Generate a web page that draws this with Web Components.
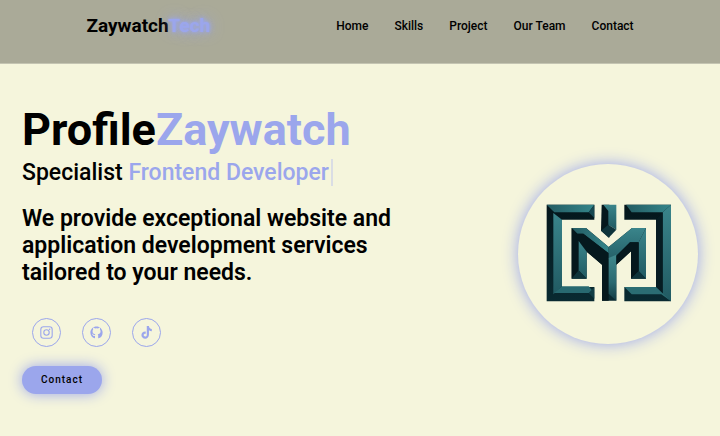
<!DOCTYPE html>
<html lang="en">
<head>
<meta charset="utf-8">
<meta name="viewport" content="width=device-width, initial-scale=1">
<title>ZaywatchTech</title>
<style>
  :root { --accent: #9ba6ec; --paper: #f5f5dc; --ink: #000; }
  body { margin: 0; background: var(--paper); color: var(--ink); font-family: Roboto, "Liberation Sans", sans-serif; }
</style>
</head>
<body>
<site-header>
  <nav-link href="#home">Home</nav-link>
  <nav-link href="#skills">Skills</nav-link>
  <nav-link href="#project">Project</nav-link>
  <nav-link href="#team">Our Team</nav-link>
  <nav-link href="#contact">Contact</nav-link>
</site-header>
<profile-hero>
  <social-link name="instagram"></social-link>
  <social-link name="github"></social-link>
  <social-link name="tiktok"></social-link>
  <brand-emblem slot="picture"></brand-emblem>
</profile-hero>

<template id="header-template">
  <style>
    :host { display: block; background: #aaaa98; border-bottom: 1px solid #c4c4b2; }
    header { display: flex; justify-content: space-between; align-items: center; padding: 14px 12% 25px; }
    .logo { font-size: 19px; line-height: 24px; font-weight: 700; color: inherit; text-decoration: none; }
    .logo span { color: var(--accent); text-shadow: 0 0 3px var(--accent), 0 0 6px var(--accent), 0 0 16px var(--accent); }
    nav { display: flex; gap: 26px; }
  </style>
  <header>
    <a class="logo" href="#home">Zaywatch<span>Tech</span></a>
    <nav aria-label="Main"><slot></slot></nav>
  </header>
</template>

<template id="nav-template">
  <style>
    :host { display: block; font-size: 12px; line-height: 24px; }
    a { color: inherit; text-decoration: none; font-weight: 500; white-space: nowrap; }
  </style>
  <a><slot></slot></a>
</template>

<template id="hero-template">
  <style>
    :host { display: block; }
    main { display: flex; justify-content: space-between; align-items: center; padding: 40px 22px; }
    .copy { flex: 0 1 380px; }
    h1 { margin: 0; font-size: 45px; line-height: 52px; font-weight: 700; white-space: nowrap; }
    h1 span, h2 span { color: var(--accent); }
    h2 { margin: 4px 0 0; font-size: 23px; line-height: 26px; font-weight: 500; white-space: nowrap; }
    h2 span { padding-right: 2px; border-right: 2px solid #dadde4; }
    p { margin: 19px 0 0; font-size: 23px; line-height: 27px; font-weight: 600; }
    .social { display: flex; gap: 21px; margin: 32px 0 0 10px; }
    button { margin-top: 19px; padding: 0 19px; border: 0; border-radius: 14px; background: var(--accent); color: inherit;
      box-shadow: 0 0 14px var(--accent); font: 500 10px/28px Roboto, "Liberation Sans", sans-serif; letter-spacing: 1px; }
    ::slotted([slot="picture"]) { margin-top: 10px; }
  </style>
  <main>
    <div class="copy">
      <h1>Profile<span>Zaywatch</span></h1>
      <h2>Specialist <span>Frontend Developer</span></h2>
      <p>We provide exceptional website and application development services tailored to your needs.</p>
      <div class="social"><slot></slot></div>
      <button type="button">Contact</button>
    </div>
    <slot name="picture"></slot>
  </main>
</template>

<template id="social-template">
  <style>
    :host { display: block; }
    a { display: grid; place-items: center; width: 27px; height: 27px; border: 1px solid var(--accent); border-radius: 50%; color: var(--accent); }
    svg { display: block; width: 13px; height: 13px; }
  </style>
  <a><svg viewBox="0 0 24 24" fill="currentColor" aria-hidden="true"></svg></a>
</template>

<template id="emblem-template">
  <style>
    :host { display: block; flex: none; width: 180px; border-radius: 50%; box-shadow: 0 0 16px var(--accent); }
    svg { display: block; width: 100%; }
  </style>
  <svg viewBox="56 43 540 540" role="img" aria-label="Emblem">
    <defs>
      <linearGradient id="top" x1="0" x2="1"><stop offset="0" stop-color="#245c63"/><stop offset="1" stop-color="#34858a"/></linearGradient>
      <linearGradient id="side" x1="0" x2="0" y1="0" y2="1"><stop offset="0" stop-color="#3a858b"/><stop offset="1" stop-color="#215a62"/></linearGradient>
      <linearGradient id="stem" x1="0" x2="0" y1="0" y2="1"><stop offset="0" stop-color="#40898d"/><stop offset=".6" stop-color="#2b6970"/><stop offset="1" stop-color="#123b43"/></linearGradient>
      <linearGradient id="dark" x1="0" x2="0" y1="0" y2="1"><stop offset="0" stop-color="#04161b"/><stop offset="1" stop-color="#092a31"/></linearGradient>
    </defs>
    <path fill="url(#dark)" d="M142 165H285V210H188V412H285V455H142Z"/>
    <path fill="url(#top)" d="M142 165H285L268 188H165Z"/>
    <path fill="#174850" d="M285 165V205L268 188Z"/>
    <path fill="url(#side)" d="M162 190L188 210V410L162 434Z"/>
    <path fill="#286970" d="M188 410H268L285 430H164Z"/>
    <path fill="#123e46" d="M285 413V447L268 430Z"/>
    <path fill="#05181d" d="M307 165H330V264L305 243Z"/>
    <path fill="url(#side)" d="M312 165H351V240L327 225V184Z"/>
    <path fill="#0e343b" d="M305 243L327 225L351 240L328 264Z"/>
    <path fill="url(#dark)" d="M375 165H515V455H375V412H470V210H375Z"/>
    <path fill="url(#top)" d="M380 165H515L490 188H397Z"/>
    <path fill="url(#side)" d="M515 165V455L490 433V188Z"/>
    <path fill="#061c22" d="M470 210L490 188V433L470 412Z"/>
    <path fill="#2b6d73" d="M375 412H470L515 455L486 434H397Z"/>
    <path fill="url(#dark)" d="M217 235H260L328 292L398 235H440V387H395V305L351 345V453H308V345L262 306V387H217Z"/>
    <path fill="url(#top)" d="M217 235H260L328 292V311L252 252H234Z"/>
    <path fill="#05181d" d="M217 235L234 252H252L328 311V453L308 453V345L262 306L238 274V365L217 387Z"/>
    <path fill="url(#side)" d="M238 274L262 306V387L238 362Z"/>
    <path fill="url(#side)" d="M328 292L398 235H440L418 278H392L351 318V345L328 326Z"/>
    <path fill="url(#stem)" d="M328 325L351 315V453L328 432Z"/>
    <path fill="url(#side)" d="M440 235V387L418 364V278Z"/>
    <path fill="#05181d" d="M362 308L392 278H418V364L395 387V305L351 345V318Z"/>
    <path fill="#0e343b" d="M217 387L238 362L262 387ZM395 387L418 364L440 387Z"/>
  </svg>
</template>

<script>
  const stamp = (host, id) => {
    const root = host.attachShadow({ mode: "open" });
    root.append(document.getElementById(id).content.cloneNode(true));
    return root;
  };

  const socialIcons = {
    instagram: `<g fill="none" stroke="currentColor" stroke-width="2"><rect x="1.5" y="1.5" width="21" height="21" rx="5"/><circle cx="12" cy="12" r="5"/></g><circle cx="17.8" cy="6.2" r="1.4"/>`,
    github: `<path d="M12 .8C5.7.8.7 5.8.7 12c0 5 3.2 9.300 7.700 10.800.6.1.8-.3.8-.6v-3.900c-3.200.7-3.900-1.400-3.900-1.400-.5-1.300-1.300-1.700-1.300-1.700-1-.7.1-.7.1-.7 1.200.1 1.800 1.200 1.800 1.200 1 1.800 2.700 1.300 3.300 1 .1-.8.4-1.300.7-1.500-2.600-.3-5.200-1.300-5.200-5.600 0-1.300.4-2.300 1.200-3.100-.1-.3-.5-1.500.1-3.100 0 0 1-.3 3.200 1.200a11 11 0 0 1 5.800 0C17.200 3.100 18.200 3.400 18.200 3.400c.6 1.600.2 2.800.1 3.100.7.8 1.200 1.800 1.200 3.100 0 4.300-2.700 5.300-5.200 5.600.4.4.8 1 .8 2.100v4.900c0 .3.2.7.8.6A11.300 11.300 0 0 0 23.300 12C23.300 5.800 18.300.8 12 .8Z"/>`,
    tiktok: `<path d="M12.500 0h4c.2 3 2.200 5.200 5.300 5.500v4.100c-2 0-3.800-.6-5.300-1.700v8.300c0 4.200-3.100 7.400-6.900 7.400-4.100 0-7-3-7-6.800 0-4.200 3.600-7.300 8-6.700v4.200c-2-.6-3.900.6-3.900 2.500 0 1.600 1.200 2.700 2.800 2.700 1.800 0 3-1.200 3-3.100Z"/>`
  };

  customElements.define("site-header", class extends HTMLElement {
    constructor() { super(); stamp(this, "header-template"); }
  });
  customElements.define("nav-link", class extends HTMLElement {
    connectedCallback() {
      if (this.shadowRoot) return;
      stamp(this, "nav-template").querySelector("a").href = this.getAttribute("href");
    }
  });
  customElements.define("profile-hero", class extends HTMLElement {
    constructor() { super(); stamp(this, "hero-template"); }
  });
  customElements.define("social-link", class extends HTMLElement {
    connectedCallback() {
      if (this.shadowRoot) return;
      const name = this.getAttribute("name");
      const link = stamp(this, "social-template").querySelector("a");
      link.href = "#" + name;
      link.setAttribute("aria-label", name);
      link.querySelector("svg").innerHTML = socialIcons[name];
    }
  });
  customElements.define("brand-emblem", class extends HTMLElement {
    constructor() { super(); stamp(this, "emblem-template"); }
  });
</script>
</body>
</html>
